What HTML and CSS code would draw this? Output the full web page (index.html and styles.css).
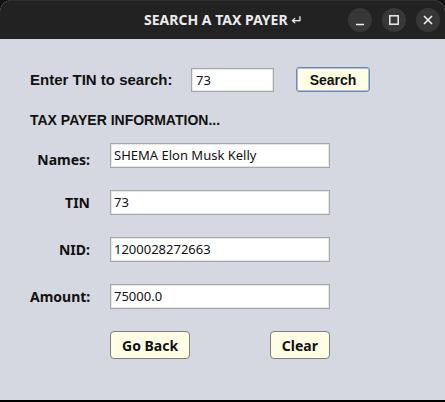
FILE: index.html
```html
<!DOCTYPE html>
<html>
<head>
<meta charset="utf-8">
<link rel="stylesheet" href="styles.css">
</head>
<body>
<div class="window">
  <div class="titlebar">
    <div class="title">SEARCH A TAX PAYER <span class="arrow">↵</span></div>
    <div class="controls">
      <span class="ctl"><svg width="24" height="24" viewBox="0 0 24 24"><path d="M8 16.5h8" stroke="#eee" stroke-width="1.6"/></svg></span>
      <span class="ctl"><svg width="24" height="24" viewBox="0 0 24 24"><rect x="7.8" y="7.8" width="8.4" height="8.4" fill="none" stroke="#eee" stroke-width="1.5"/></svg></span>
      <span class="ctl"><svg width="24" height="24" viewBox="0 0 24 24"><path d="M8 8l8 8M16 8l-8 8" stroke="#eee" stroke-width="1.6"/></svg></span>
    </div>
  </div>
  <div class="content">
    <div class="search-row">
      <label class="search-label">Enter TIN to search:</label>
      <div class="field small">73</div>
      <button class="search-btn">Search</button>
    </div>
    <div class="section">TAX PAYER INFORMATION...</div>
    <div class="form">
      <div class="lbl lbl-names">Names:</div>
      <div class="field">SHEMA Elon Musk Kelly</div>
      <div class="lbl">TIN</div>
      <div class="field">73</div>
      <div class="lbl">NID:</div>
      <div class="field">1200028272663</div>
      <div class="lbl">Amount:</div>
      <div class="field">75000.0</div>
      <div class="actions">
        <button class="btn">Go Back</button>
        <button class="btn">Clear</button>
      </div>
    </div>
  </div>
</div>
<div class="bottom"></div>
</body>
</html>
```
FILE: styles.css
```css
html, body {
  margin: 0;
  padding: 0;
  width: 445px;
  height: 402px;
  overflow: hidden;
  background: #121212;
}
.window {
  width: 445px;
  height: 400px;
  display: flex;
  flex-direction: column;
  background: #d5d8e0;
  border-radius: 12px 12px 0 0;
  overflow: hidden;
}
.titlebar {
  height: 39px;
  flex: none;
  background: #222222;
  position: relative;
  display: flex;
  align-items: center;
  justify-content: center;
  box-shadow: inset 0 1px 0 #2e2e2e;
}
.title {
  color: #ececec;
  font-family: "Noto Sans", "Open Sans", sans-serif;
  font-weight: 700;
  font-size: 14px;
  margin-left: 2px;
}
.arrow {
  font-weight: 400;
  font-family: "DejaVu Sans", sans-serif;
  font-size: 14px;
}
.controls {
  position: absolute;
  right: 5px;
  top: 8px;
  display: flex;
  gap: 10px;
}
.ctl {
  width: 24px;
  height: 24px;
  border-radius: 50%;
  background: #373737;
  display: block;
}
.ctl svg { display: block; }
.content {
  flex: 1;
  padding: 28px 0 0 30px;
}
.search-row {
  display: flex;
  align-items: center;
  height: 25px;
}
.search-label {
  width: 161px;
  flex: none;
  font-family: "Liberation Sans", Arial, sans-serif;
  font-weight: 700;
  font-size: 15px;
  color: #111;
}
.field {
  box-sizing: border-box;
  height: 25px;
  width: 220px;
  background: #fff;
  border: 1px solid #a6a6a6;
  box-shadow: inset 0 0 0 1px #e8e8e8;
  font-family: "Noto Sans", "Open Sans", sans-serif;
  font-size: 13px;
  color: #111;
  padding-left: 3px;
  line-height: 23px;
}
.field.small {
  width: 83px;
  height: 24px;
  line-height: 22px;
  margin-top: 1px;
  padding-left: 4px;
}
.search-btn {
  margin-left: 22px;
  box-sizing: border-box;
  width: 74px;
  height: 25px;
  background: #fffde3;
  border: 1px solid #6f89ad;
  border-radius: 3px;
  box-shadow: inset 0 0 0 1px #a9c2e4;
  font-family: "Liberation Sans", Arial, sans-serif;
  font-weight: 700;
  font-size: 14px;
  color: #111;
  padding: 0;
}
.section {
  margin-top: 20px;
  font-family: "Liberation Sans", Arial, sans-serif;
  font-weight: 700;
  font-size: 14px;
  line-height: 16px;
  color: #111;
}
.form {
  margin-top: 15px;
  display: grid;
  grid-template-columns: 60px 220px;
  grid-auto-rows: 25px;
  column-gap: 20px;
  row-gap: 22px;
}
.lbl {
  align-self: center;
  text-align: right;
  font-family: "Noto Sans", "Open Sans", sans-serif;
  font-weight: 700;
  font-size: 14px;
  line-height: 18px;
  color: #111;
}
.lbl-names {
  padding-top: 9px;
}
.actions {
  grid-column: 2;
  height: 28px;
  display: flex;
  justify-content: space-between;
}
.btn {
  box-sizing: border-box;
  height: 28px;
  padding: 0 11px;
  background: #fffde3;
  border: 1px solid #7d7d7d;
  border-radius: 4px;
  font-family: "Noto Sans", "Open Sans", sans-serif;
  font-weight: 700;
  font-size: 14px;
  color: #111;
}
.bottom {
  height: 2px;
  background: #000;
}
```
